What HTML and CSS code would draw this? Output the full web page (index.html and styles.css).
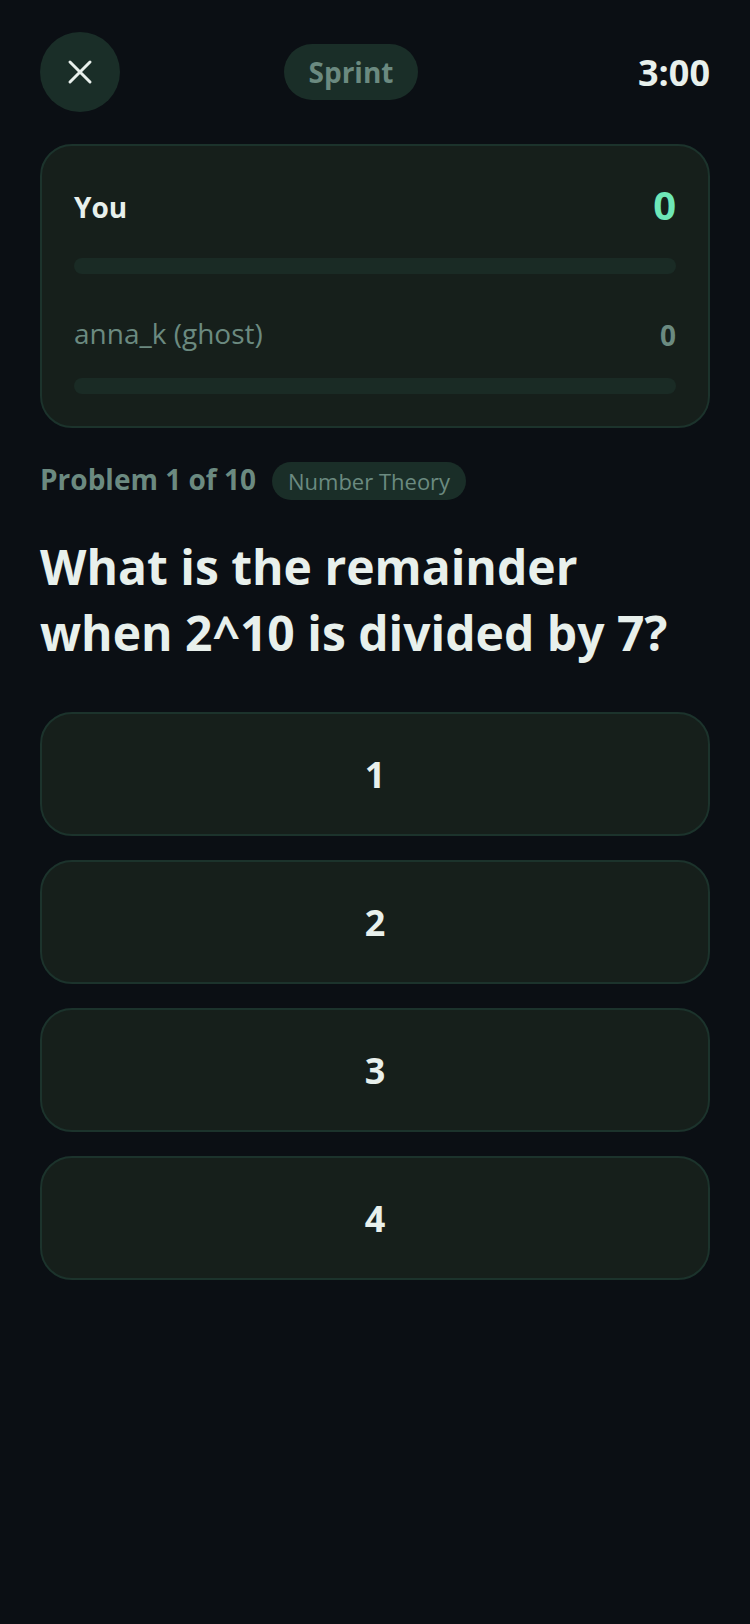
FILE: index.html
```html
<!DOCTYPE html>
<html lang="en">

<head>
    <meta charset="UTF-8">
    <meta name="viewport" content="width=device-width, initial-scale=1.0">
    <title>Sprint</title>
    <link rel="stylesheet" href="styles.css">
</head>

<body>

    <div class="top-bar">
        <button class="close-btn">
            <svg width="32" height="32" viewBox="0 0 32 32" fill="none" stroke="#e8f0ec" stroke-width="3" stroke-linecap="round">
                <path d="M6 6L26 26M26 6L6 26" />
            </svg>
        </button>
        <div class="mode-pill">Sprint</div>
        <div class="timer">3:00</div>
    </div>

    <div class="score-card">
        <div class="score-row">
            <span class="you-name">You</span>
            <span class="you-score">0</span>
        </div>
        <div class="bar"></div>
        <div class="score-row ghost-row">
            <span class="ghost-name">anna_k (ghost)</span>
            <span class="ghost-score">0</span>
        </div>
        <div class="bar"></div>
    </div>

    <div class="problem-row">
        <span class="problem-count">Problem 1 of 10</span>
        <span class="topic-pill">Number Theory</span>
    </div>

    <h1 class="question">What is the remainder when 2^10 is divided by 7?</h1>

    <div class="options">
        <button class="option">1</button>
        <button class="option">2</button>
        <button class="option">3</button>
        <button class="option">4</button>
    </div>

</body>

</html>
```
FILE: styles.css
```css
body {
    font-family: "Open Sans", sans-serif;
    margin: 0;
    padding: 32px 40px 0;
    min-height: 1624px;
    box-sizing: border-box;
    background-color: #0b0f14;
    color: #e8f0ec;
}

.top-bar {
    display: flex;
    justify-content: space-between;
    align-items: center;
}

.close-btn {
    display: flex;
    justify-content: center;
    align-items: center;
    width: 80px;
    height: 80px;
    padding: 0;
    border: none;
    border-radius: 50%;
    background-color: #1a2e28;
}

.mode-pill {
    display: flex;
    align-items: center;
    height: 56px;
    padding: 0 25px;
    border-radius: 28px;
    background-color: #1a2e28;
    color: #6b8a80;
    font-size: 28px;
    font-weight: 700;
}

.timer {
    width: 128px;
    text-align: right;
    font-size: 36px;
    font-weight: 700;
}

.score-card {
    margin-top: 32px;
    padding: 32px;
    border: 2px solid #1c332c;
    border-radius: 32px;
    background-color: #161f1b;
}

.score-row {
    display: flex;
    justify-content: space-between;
    align-items: center;
    height: 56px;
}

.ghost-row {
    height: 46px;
    margin-top: 38px;
    margin-bottom: 20px;
}

.you-name {
    margin-top: 2px;
    font-size: 28px;
    font-weight: 700;
}

.you-score {
    margin-bottom: 4px;
    font-size: 40px;
    font-weight: 700;
    color: #6ee7b7;
}

.ghost-name {
    margin-bottom: 4px;
    font-size: 28px;
    color: #6b8a80;
}

.ghost-score {
    font-size: 28px;
    font-weight: 700;
    color: #6b8a80;
}

.bar {
    height: 16px;
    margin-top: 24px;
    border-radius: 8px;
    background-color: #1a2b25;
}

.ghost-row + .bar {
    margin-top: 0;
}

.problem-row {
    display: flex;
    align-items: flex-start;
    gap: 16px;
    margin-top: 34px;
}

.problem-count {
    font-size: 28px;
    font-weight: 700;
    line-height: 34px;
    color: #6b8a80;
}

.topic-pill {
    padding: 4px 16px;
    border-radius: 19px;
    background-color: #1a2e28;
    color: #6b8a80;
    font-size: 22px;
    line-height: 30px;
}

.question {
    margin: 34px 0 0;
    font-size: 48px;
    font-weight: 700;
    line-height: 66px;
}

.options {
    display: flex;
    flex-direction: column;
    gap: 24px;
    margin-top: 46px;
}

.option {
    height: 124px;
    border: 2px solid #1c332c;
    border-radius: 32px;
    background-color: #161f1b;
    color: #e8f0ec;
    font-family: "Open Sans", sans-serif;
    font-size: 36px;
    font-weight: 700;
}
```
